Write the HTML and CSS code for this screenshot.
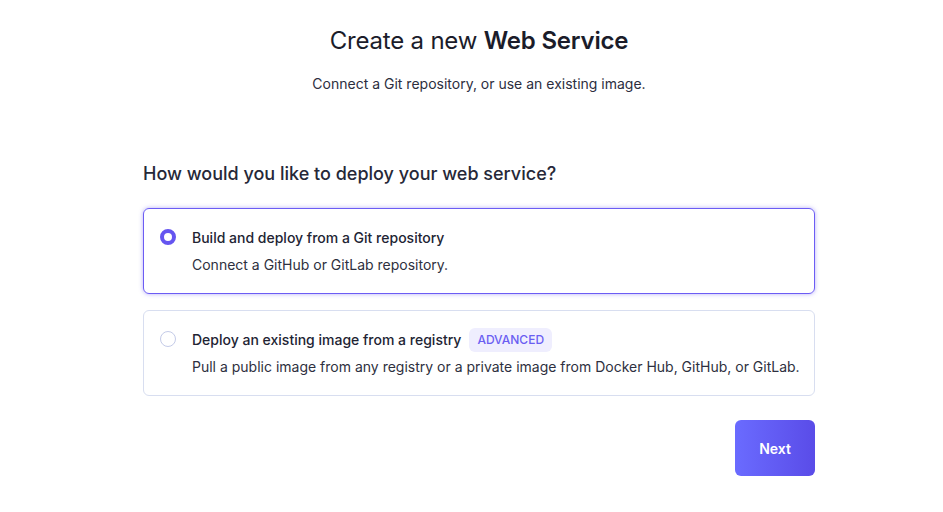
FILE: index.html
```html
<!DOCTYPE html>
<html lang="en">
<head>
    <meta charset="UTF-8">
    <meta name="viewport" content="width=device-width, initial-scale=1.0">
    <title>Create a new Web Service</title>
    <link rel="stylesheet" href="styles.css">
</head>
<body>
    <div class="page">
        <div class="page-header">
            <h1>Create a new <strong>Web Service</strong></h1>
            <p>Connect a Git repository, or use an existing image.</p>
        </div>

        <h2 class="question">How would you like to deploy your web service?</h2>

        <div class="options">
            <label class="option selected">
                <span class="radio"></span>
                <span class="option-body">
                    <span class="option-title">Build and deploy from a Git repository</span>
                    <span class="option-desc">Connect a GitHub or GitLab repository.</span>
                </span>
            </label>
            <label class="option">
                <span class="radio"></span>
                <span class="option-body">
                    <span class="option-title">Deploy an existing image from a registry <span class="badge">ADVANCED</span></span>
                    <span class="option-desc">Pull a public image from any registry or a private image from Docker Hub, GitHub, or GitLab.</span>
                </span>
            </label>
        </div>

        <div class="actions">
            <button type="button" class="btn-next">Next</button>
        </div>
    </div>
</body>
</html>
```

FILE: styles.css
```css
* {
    margin: 0;
    padding: 0;
    box-sizing: border-box;
}

body {
    font-family: 'Inter', 'Noto Sans', sans-serif;
    background: #ffffff;
    color: #1f2030;
    padding-left: 15px;
}

.page {
    width: 672px;
    margin: 0 auto;
    padding-top: 25px;
}

.page-header {
    text-align: center;
}

.page-header h1 {
    font-size: 24px;
    line-height: 32px;
    font-weight: 400;
    letter-spacing: -0.2px;
    color: #1b1c2a;
}

.page-header h1 strong {
    font-weight: 600;
}

.page-header p {
    margin-top: 17px;
    font-size: 14px;
    line-height: 20px;
    color: #2c2e3e;
}

.question {
    margin-top: 68px;
    font-size: 18px;
    line-height: 24px;
    font-weight: 500;
    color: #262838;
}

.options {
    margin-top: 22px;
    display: flex;
    flex-direction: column;
    gap: 16px;
}

.option {
    display: flex;
    align-items: flex-start;
    gap: 16px;
    height: 86px;
    padding: 20px 8px 20px 16px;
    border: 1px solid #d8def0;
    border-radius: 6px;
    cursor: pointer;
}

.option.selected {
    border-color: #6c5cf4;
    box-shadow: 0 0 4px rgba(108, 92, 244, 0.5);
}

.radio {
    flex: none;
    width: 16px;
    height: 16px;
    margin-top: 0;
    border-radius: 50%;
    border: 1.5px solid #c4cbe8;
    background: #fff;
}

.option.selected .radio {
    border: 4px solid #6555f0;
}

.option-body {
    display: flex;
    flex-direction: column;
    gap: 8px;
}

.option-title {
    display: flex;
    align-items: center;
    gap: 8px;
    font-size: 14px;
    line-height: 18px;
    font-weight: 500;
    color: #222433;
}

.option-desc {
    font-size: 14px;
    line-height: 20px;
    color: #2e3040;
    white-space: nowrap;
}

.badge {
    font-size: 12px;
    line-height: 16px;
    font-weight: 500;
    color: #6a5ef2;
    background: #efeefe;
    border-radius: 6px;
    padding: 4px 8px;
    margin-top: -3px;
    margin-bottom: -3px;
}

.actions {
    display: flex;
    justify-content: flex-end;
    margin-top: 24px;
}

.btn-next {
    width: 80px;
    height: 56px;
    border: none;
    border-radius: 6px;
    background: linear-gradient(90deg, #6a6bff, #5a4ce8);
    color: #ffffff;
    font-family: inherit;
    font-size: 14px;
    font-weight: 600;
    cursor: pointer;
}
```
